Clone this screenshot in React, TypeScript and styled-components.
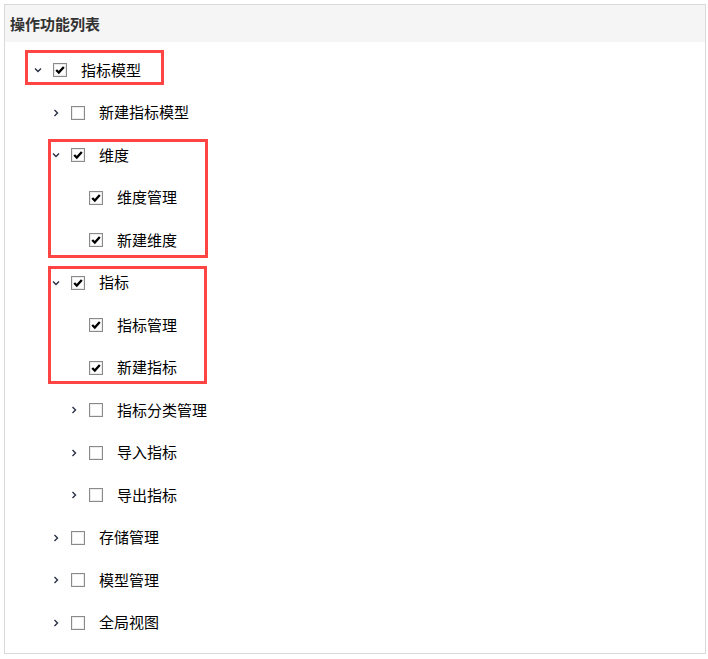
import React from 'react';
import styled, { createGlobalStyle } from 'styled-components';

const GlobalStyle = createGlobalStyle`
  html, body {
    margin: 0;
    padding: 0;
    background: #fff;
  }
  body {
    font-family: "Noto Sans CJK SC", "Microsoft YaHei", sans-serif;
    color: #000;
  }
`;

type Node = {
  label: string;
  checked?: boolean;
  expandable?: boolean;
  expanded?: boolean;
  children?: Node[];
};

type Mark = { left: number; width: number; top: number; bottom: number };

const Panel = styled.section`
  margin: 4px 0 0 4px;
  width: 702px;
  height: 650px;
  box-sizing: border-box;
  border: 1px solid #d9d9d9;
  background: #fff;
`;

const Header = styled.header`
  height: 37px;
  display: flex;
  align-items: center;
  padding-left: 5px;
  background: #f5f5f5;
  font-size: 15px;
  font-weight: 700;
  color: #333;
`;

const Tree = styled.div`
  padding-top: 7px;
`;

const Group = styled.div<{ $mark?: Mark }>`
  position: relative;
  ${({ $mark }) => $mark && `
    &::after {
      content: '';
      position: absolute;
      left: ${$mark.left}px;
      width: ${$mark.width}px;
      top: ${$mark.top}px;
      bottom: ${$mark.bottom}px;
      border: 3px solid #ff4444;
      box-sizing: border-box;
      pointer-events: none;
    }
  `}
`;

const Row = styled.div<{ $level: number }>`
  height: 42.5px;
  display: flex;
  align-items: center;
  padding-left: ${({ $level }) => 26 + $level * 18}px;
  box-sizing: border-box;
  font-size: 15px;
`;

const Toggle = styled.span`
  width: 14px;
  height: 14px;
  display: inline-flex;
  align-items: center;
  justify-content: center;
  color: #333;
`;

const Box = styled.span<{ $checked?: boolean }>`
  width: 14px;
  height: 14px;
  margin-left: 8px;
  box-sizing: border-box;
  border: 1px solid #8a8a8a;
  background: #fff;
  display: inline-flex;
  align-items: center;
  justify-content: center;
  box-shadow: inset 0 0 0 1px #ececec;
`;

const Label = styled.span`
  margin-left: 14px;
  line-height: 1;
  transform: translateY(-1px);
`;

const Chevron = ({ open }: { open?: boolean }) => (
  <svg width="8" height="8" viewBox="0 0 8 8">
    <path
      d={open ? 'M1 2.5 L4 5.5 L7 2.5' : 'M2.5 1 L5.5 4 L2.5 7'}
      fill="none"
      stroke="#2a2f45"
      strokeWidth="1.4"
    />
  </svg>
);

const Check = () => (
  <svg width="12" height="12" viewBox="0 0 12 12">
    <path d="M2.2 6 L4.8 8.6 L9.8 3" fill="none" stroke="#000" strokeWidth="2.3" />
  </svg>
);

const TreeRow = ({ node, level }: { node: Node; level: number }) => (
  <Row $level={level}>
    <Toggle>{node.expandable && <Chevron open={node.expanded} />}</Toggle>
    <Box $checked={node.checked}>{node.checked && <Check />}</Box>
    <Label>{node.label}</Label>
  </Row>
);

const leaf = (label: string, checked = false): Node => ({ label, checked });
const folder = (label: string, checked = false, children?: Node[]): Node => ({
  label,
  checked,
  expandable: true,
  expanded: !!children,
  children,
});

const dimension = folder('维度', true, [leaf('维度管理', true), leaf('新建维度', true)]);
const metric = folder('指标', true, [leaf('指标管理', true), leaf('新建指标', true)]);

const rest: Node[] = [
  folder('指标分类管理'),
  folder('导入指标'),
  folder('导出指标'),
];

const tail: Node[] = [folder('存储管理'), folder('模型管理'), folder('全局视图')];

const OperationTree = () => (
  <Panel>
    <Header>操作功能列表</Header>
    <Tree>
      <Group $mark={{ left: 20, width: 139, top: 1, bottom: 7 }}>
        <TreeRow node={folder('指标模型', true, [])} level={0} />
      </Group>
      <TreeRow node={folder('新建指标模型')} level={1} />
      <Group $mark={{ left: 43, width: 160, top: 5, bottom: 4 }}>
        <TreeRow node={dimension} level={1} />
        {dimension.children!.map((n) => (
          <TreeRow key={n.label} node={n} level={2} />
        ))}
      </Group>
      <Group $mark={{ left: 43, width: 159, top: 4, bottom: 5 }}>
        <TreeRow node={metric} level={1} />
        {metric.children!.map((n) => (
          <TreeRow key={n.label} node={n} level={2} />
        ))}
      </Group>
      {rest.map((n) => (
        <TreeRow key={n.label} node={n} level={2} />
      ))}
      {tail.map((n) => (
        <TreeRow key={n.label} node={n} level={1} />
      ))}
    </Tree>
  </Panel>
);

const App = () => (
  <>
    <GlobalStyle />
    <OperationTree />
  </>
);

export default App;
